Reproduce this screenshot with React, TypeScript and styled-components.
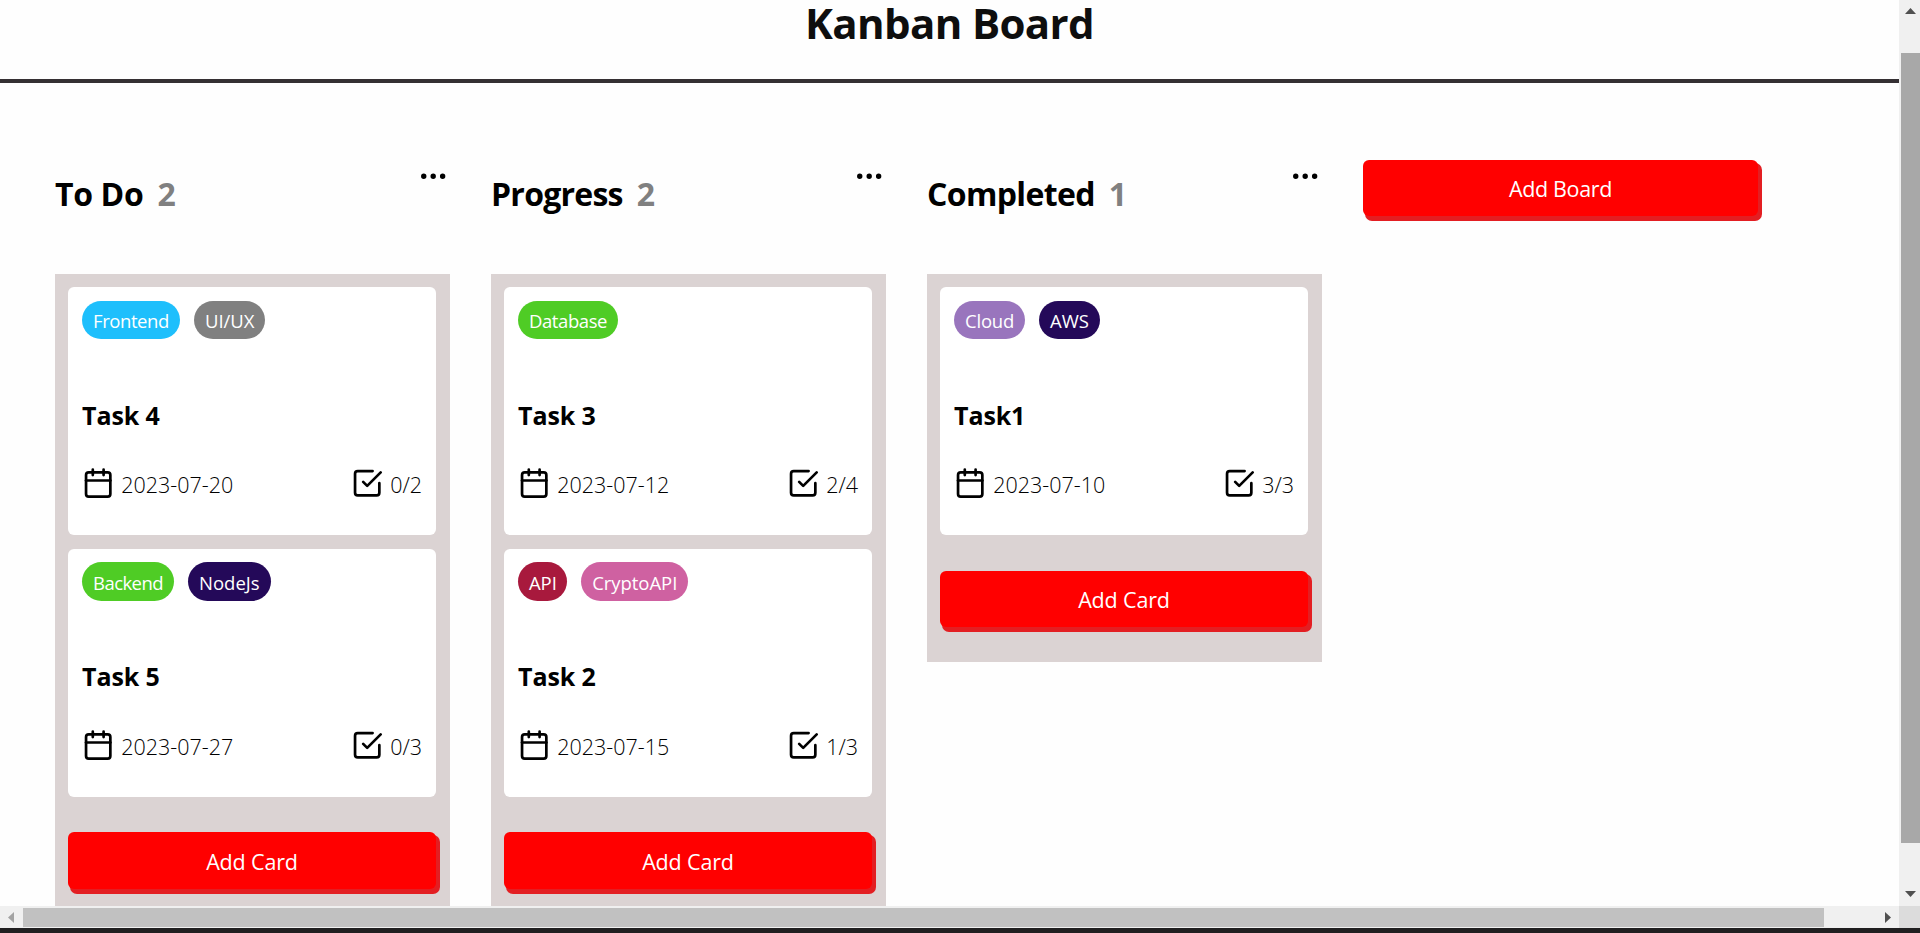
import React from "react";
import styled, { createGlobalStyle } from "styled-components";
import { FiCalendar, FiCheckSquare, FiMoreHorizontal } from "react-icons/fi";

const GlobalStyle = createGlobalStyle`
  *, *::before, *::after { box-sizing: border-box; }
  body {
    margin: 0;
    overflow: hidden;
    background: #fefefe;
    color: #000;
    font-family: "Open Sans", "Noto Sans", sans-serif;
  }
`;

const Window = styled.div`
  display: flex;
  flex-direction: column;
  width: 1920px;
  height: 933px;
  overflow: hidden;
`;

const Body = styled.div`
  display: grid;
  grid-template-columns: 1899px 21px;
  grid-template-rows: 906px 22px;
`;

const Page = styled.div`
  overflow: hidden;
`;

const Header = styled.header`
  height: 83px;
  border-bottom: 4px solid #353033;
`;

const AppTitle = styled.h1`
  margin: 0;
  color: #0e0e0e;
  font-size: 42px;
  font-weight: 700;
  line-height: 45px;
  letter-spacing: -0.63px;
  text-align: center;
`;

const Boards = styled.main`
  display: flex;
  align-items: flex-start;
  gap: 41px;
  padding: 77px 0 0 55px;
`;

const Column = styled.section`
  width: 395px;
`;

const ColumnHeader = styled.div`
  display: flex;
  justify-content: space-between;
  height: 114px;
`;

const ColumnTitle = styled.h2<{ $tracking: number }>`
  margin: 14px 0 0;
  font-size: 32px;
  font-weight: 700;
  line-height: 39px;
  letter-spacing: ${(p) => p.$tracking}px;
`;

const Count = styled.span`
  margin-left: 14px;
  color: #808080;
  letter-spacing: 0;
`;

const MoreIcon = styled(FiMoreHorizontal)`
  width: 32.4px;
  height: 32.4px;
  margin-right: 0.8px;
`;

const CardList = styled.div`
  padding: 13px 14px 34.2px 13px;
  background: #dbd3d3;
`;

const Card = styled.article`
  height: 248.1px;
  margin-bottom: 13.5px;
  padding: 13.7px 14px;
  border-radius: 6px;
  background: #fff;
`;

const Tags = styled.div`
  display: flex;
  gap: 14px;
  height: 38.4px;
`;

const TagPill = styled.span<{ $color: string; $width: number; $tracking: number }>`
  width: ${(p) => p.$width}px;
  padding: 0.6px 0 0 11px;
  border-radius: 20px;
  background: ${(p) => p.$color};
  color: #fff;
  font-size: 18.5px;
  line-height: 39px;
  letter-spacing: ${(p) => p.$tracking}px;
  white-space: nowrap;
`;

const TaskTitle = styled.h3`
  margin: 58.7px 0 35.3px;
  font-size: 25px;
  font-weight: 700;
  line-height: 34px;
  letter-spacing: -0.1px;
`;

const CardFooter = styled.div`
  display: flex;
  justify-content: space-between;
`;

const Meta = styled.div`
  display: flex;
  gap: 6.8px;
  font-size: 21.5px;
  font-weight: 360;
  line-height: 36px;

  svg {
    width: 32.4px;
    height: 32.4px;
  }
`;

const AddButton = styled.button<{ $height: number; $tracking: number }>`
  display: block;
  width: 100%;
  height: ${(p) => p.$height}px;
  padding: 1px 0 0;
  border: 0;
  border-radius: 6px;
  background: #ff0000;
  box-shadow: 3px 4px 0 1px #e31e22;
  color: #fff;
  font-family: inherit;
  font-size: 21.5px;
  letter-spacing: ${(p) => p.$tracking}px;
`;

const AddCardSlot = styled.div`
  padding-top: 22.1px;
`;

const VerticalBar = styled.div`
  display: flex;
  flex-direction: column;
  align-items: center;
  padding: 8px 0 0 2px;
  background: #f0f0f0;
`;

const VerticalThumb = styled.div`
  width: 19px;
  height: 790px;
  margin: 39px 0 48px;
  background: #a8a8a8;
`;

const HorizontalBar = styled.div`
  display: flex;
  align-items: center;
  padding: 0 8px;
  background: #f0f0f0;
`;

const HorizontalThumb = styled.div`
  width: 1801px;
  height: 19px;
  margin: 0 61px 0 9px;
  background: #c1c1c1;
`;

const Corner = styled.div`
  background: #dcdcdc;
`;

const Arrow = styled.svg`
  display: block;
  flex: none;
`;

const BottomEdge = styled.div`
  flex: 1;
  background: #201f20;
`;

type Tag = { label: string; color: string; width: number; tracking: number };
type Task = { title: string; date: string; done: string; tags: Tag[] };
type Board = { title: string; tracking: number; tasks: Task[] };

const boards: Board[] = [
  {
    title: "To Do",
    tracking: -0.35,
    tasks: [
      {
        title: "Task 4",
        date: "2023-07-20",
        done: "0/2",
        tags: [
          { label: "Frontend", color: "#1ebffc", width: 98, tracking: -0.42 },
          { label: "UI/UX", color: "#808080", width: 71, tracking: -0.05 },
        ],
      },
      {
        title: "Task 5",
        date: "2023-07-27",
        done: "0/3",
        tags: [
          { label: "Backend", color: "#4fcc25", width: 92, tracking: -0.55 },
          { label: "NodeJs", color: "#240959", width: 83, tracking: 0 },
        ],
      },
    ],
  },
  {
    title: "Progress",
    tracking: -0.75,
    tasks: [
      {
        title: "Task 3",
        date: "2023-07-12",
        done: "2/4",
        tags: [{ label: "Database", color: "#4fcc25", width: 100, tracking: -0.42 }],
      },
      {
        title: "Task 2",
        date: "2023-07-15",
        done: "1/3",
        tags: [
          { label: "API", color: "#a8193d", width: 49.2, tracking: -0.1 },
          { label: "CryptoAPI", color: "#cf61a1", width: 107, tracking: -0.05 },
        ],
      },
    ],
  },
  {
    title: "Completed",
    tracking: -0.65,
    tasks: [
      {
        title: "Task1",
        date: "2023-07-10",
        done: "3/3",
        tags: [
          { label: "Cloud", color: "#9975bd", width: 71, tracking: -0.2 },
          { label: "AWS", color: "#240959", width: 61, tracking: 0 },
        ],
      },
    ],
  },
];

function TaskCard({ task }: { task: Task }) {
  return (
    <Card>
      <Tags>
        {task.tags.map((tag) => (
          <TagPill key={tag.label} $color={tag.color} $width={tag.width} $tracking={tag.tracking}>
            {tag.label}
          </TagPill>
        ))}
      </Tags>
      <TaskTitle>{task.title}</TaskTitle>
      <CardFooter>
        <Meta>
          <FiCalendar />
          <span>{task.date}</span>
        </Meta>
        <Meta>
          <FiCheckSquare />
          <span>{task.done}</span>
        </Meta>
      </CardFooter>
    </Card>
  );
}

export default function App() {
  return (
    <Window>
      <GlobalStyle />
      <Body>
        <Page>
          <Header>
            <AppTitle>Kanban Board</AppTitle>
          </Header>
          <Boards>
            {boards.map((board) => (
              <Column key={board.title}>
                <ColumnHeader>
                  <ColumnTitle $tracking={board.tracking}>
                    {board.title}
                    <Count>{board.tasks.length}</Count>
                  </ColumnTitle>
                  <MoreIcon />
                </ColumnHeader>
                <CardList>
                  {board.tasks.map((task) => (
                    <TaskCard key={task.title} task={task} />
                  ))}
                  <AddCardSlot>
                    <AddButton $height={56.8} $tracking={-0.15}>
                      Add Card
                    </AddButton>
                  </AddCardSlot>
                </CardList>
              </Column>
            ))}
            <Column>
              <AddButton $height={56.4} $tracking={-0.35}>
                Add Board
              </AddButton>
            </Column>
          </Boards>
        </Page>
        <VerticalBar>
          <Arrow width="11" height="6" fill="#505050">
            <path d="M5.5 0 11 6H0Z" />
          </Arrow>
          <VerticalThumb />
          <Arrow width="11" height="6" fill="#505050">
            <path d="M0 0H11L5.5 6Z" />
          </Arrow>
        </VerticalBar>
        <HorizontalBar>
          <Arrow width="6" height="11" fill="#a3a3a3">
            <path d="M6 0V11L0 5.5Z" />
          </Arrow>
          <HorizontalThumb />
          <Arrow width="6" height="11" fill="#505050">
            <path d="M0 0V11L6 5.5Z" />
          </Arrow>
        </HorizontalBar>
        <Corner />
      </Body>
      <BottomEdge />
    </Window>
  );
}
